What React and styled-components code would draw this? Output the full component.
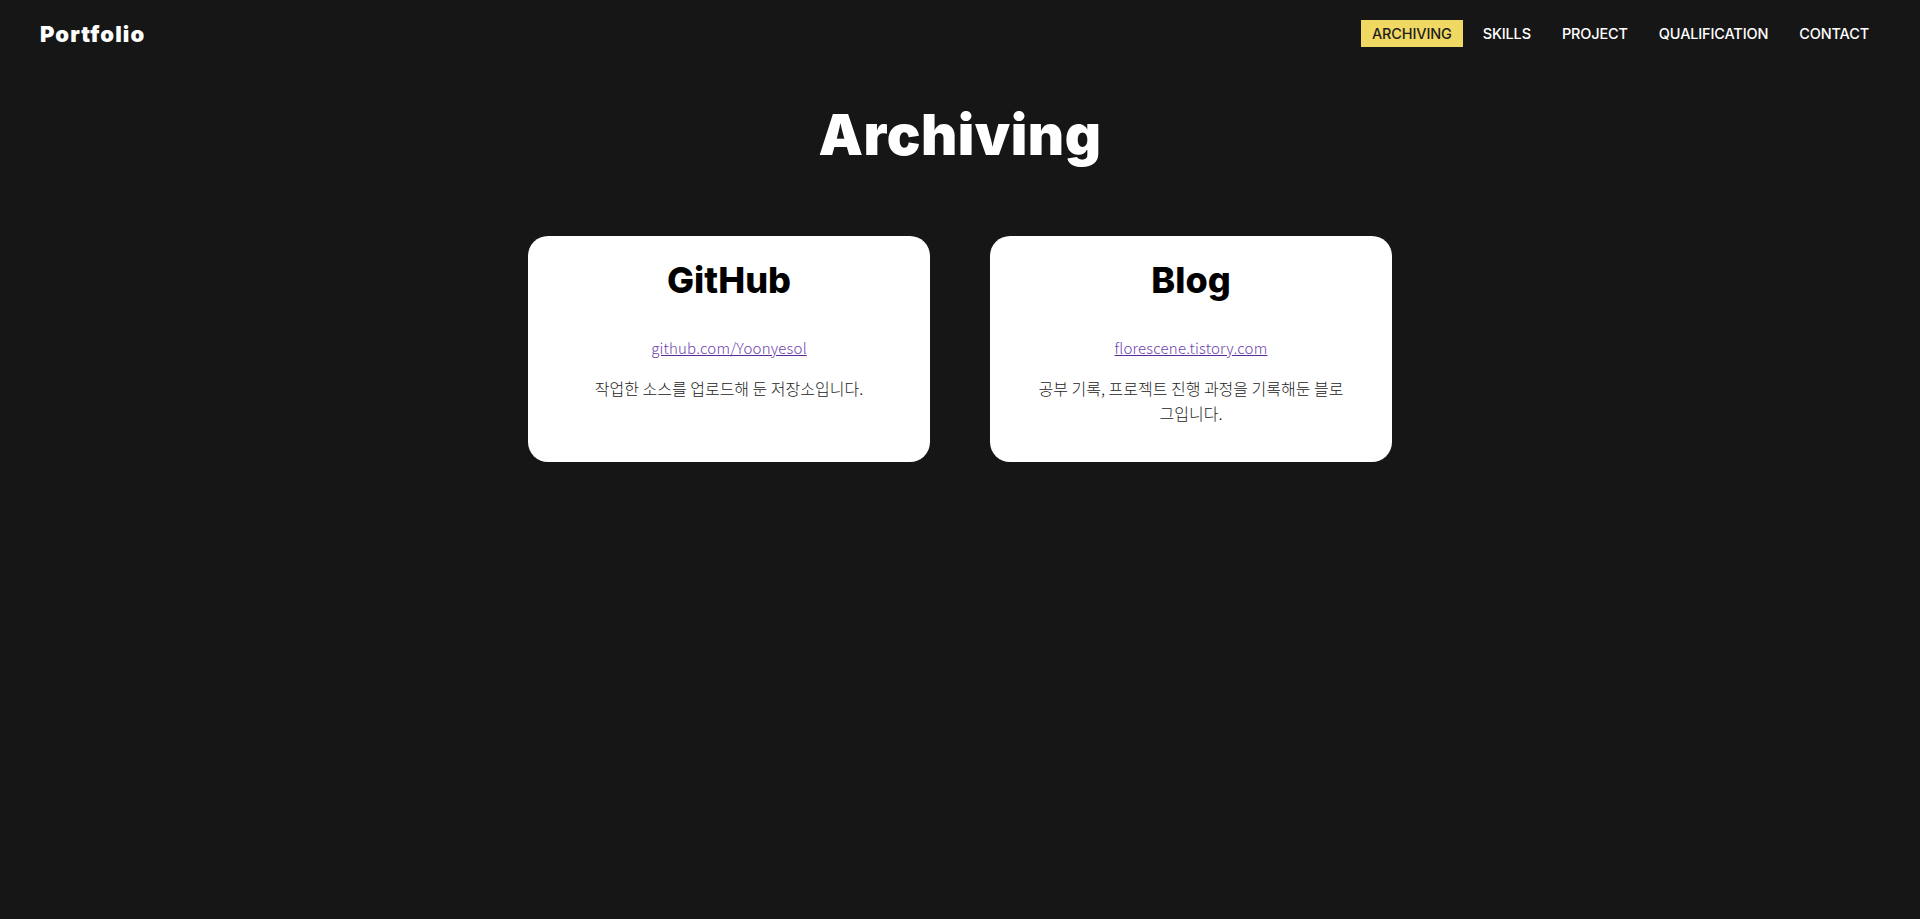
import React from 'react';
import styled, { createGlobalStyle } from 'styled-components';

const GlobalStyle = createGlobalStyle`
  body {
    margin: 0;
    background: #161616;
    font-family: 'Inter', 'Noto Sans CJK KR', sans-serif;
  }
`;

const Page = styled.div`
  min-height: 100vh;
  background: #161616;
  color: #fff;
`;

const Header = styled.header`
  display: flex;
  justify-content: space-between;
  align-items: center;
  height: 67px;
  padding: 0 40px;
`;

const Logo = styled.div`
  font-family: 'Inter', sans-serif;
  font-weight: 900;
  font-size: 22px;
  letter-spacing: 1.1px;
  color: #fff;
`;

const Nav = styled.nav`
  display: flex;
  gap: 9px;
`;

const NavItem = styled.a`
  display: block;
  padding: 0 11px;
  height: 27px;
  line-height: 28px;
  font-family: 'Inter', sans-serif;
  font-size: 14.5px;
  font-weight: 500;
  letter-spacing: -0.15px;
  color: ${(p) => (p.$active ? '#1e1e1e' : '#fff')};
  background: ${(p) => (p.$active ? '#f0d962' : 'transparent')};
  cursor: pointer;
`;

const Section = styled.section`
  display: flex;
  flex-direction: column;
  align-items: center;
`;

const Title = styled.h1`
  margin: 34px 0 0;
  font-family: 'Inter', sans-serif;
  font-weight: 900;
  font-size: 56px;
  line-height: 68px;
  letter-spacing: 0.5px;
  color: #fff;
`;

const Cards = styled.div`
  display: grid;
  grid-template-columns: 402px 402px;
  gap: 60px;
  margin-top: 67px;
`;

const Card = styled.div`
  background: #fff;
  border-radius: 20px;
  padding: 22px 43px 36px;
  text-align: center;
  color: #333;
`;

const CardTitle = styled.h2`
  margin: 0;
  font-family: 'Inter', sans-serif;
  font-weight: 800;
  font-size: 36px;
  line-height: 44px;
  color: #000;
`;

const CardLink = styled.a`
  display: inline-block;
  margin-top: 35px;
  font-family: 'Noto Sans CJK KR', 'Noto Sans', sans-serif;
  font-weight: 300;
  font-size: 15px;
  letter-spacing: 0.2px;
  color: #6f42b0;
  text-decoration: underline;
  text-decoration-color: #5a2a9a;
  cursor: pointer;
`;

const CardText = styled.p`
  margin: 18px 0 0;
  font-family: 'Noto Sans CJK KR', sans-serif;
  font-weight: 300;
  font-size: 16px;
  line-height: 25px;
  color: #222;
`;

const navItems = ['ARCHIVING', 'SKILLS', 'PROJECT', 'QUALIFICATION', 'CONTACT'];

const archives = [
  {
    title: 'GitHub',
    link: 'github.com/Yoonyesol',
    text: '작업한 소스를 업로드해 둔 저장소입니다.',
  },
  {
    title: 'Blog',
    link: 'florescene.tistory.com',
    text: '공부 기록, 프로젝트 진행 과정을 기록해둔 블로그입니다.',
  },
];

export default function App() {
  return (
    <Page>
      <GlobalStyle />
      <Header>
        <Logo>Portfolio</Logo>
        <Nav>
          {navItems.map((item, i) => (
            <NavItem key={item} $active={i === 0}>
              {item}
            </NavItem>
          ))}
        </Nav>
      </Header>
      <Section>
        <Title>Archiving</Title>
        <Cards>
          {archives.map((a) => (
            <Card key={a.title}>
              <CardTitle>{a.title}</CardTitle>
              <CardLink>{a.link}</CardLink>
              <CardText>{a.text}</CardText>
            </Card>
          ))}
        </Cards>
      </Section>
    </Page>
  );
}
